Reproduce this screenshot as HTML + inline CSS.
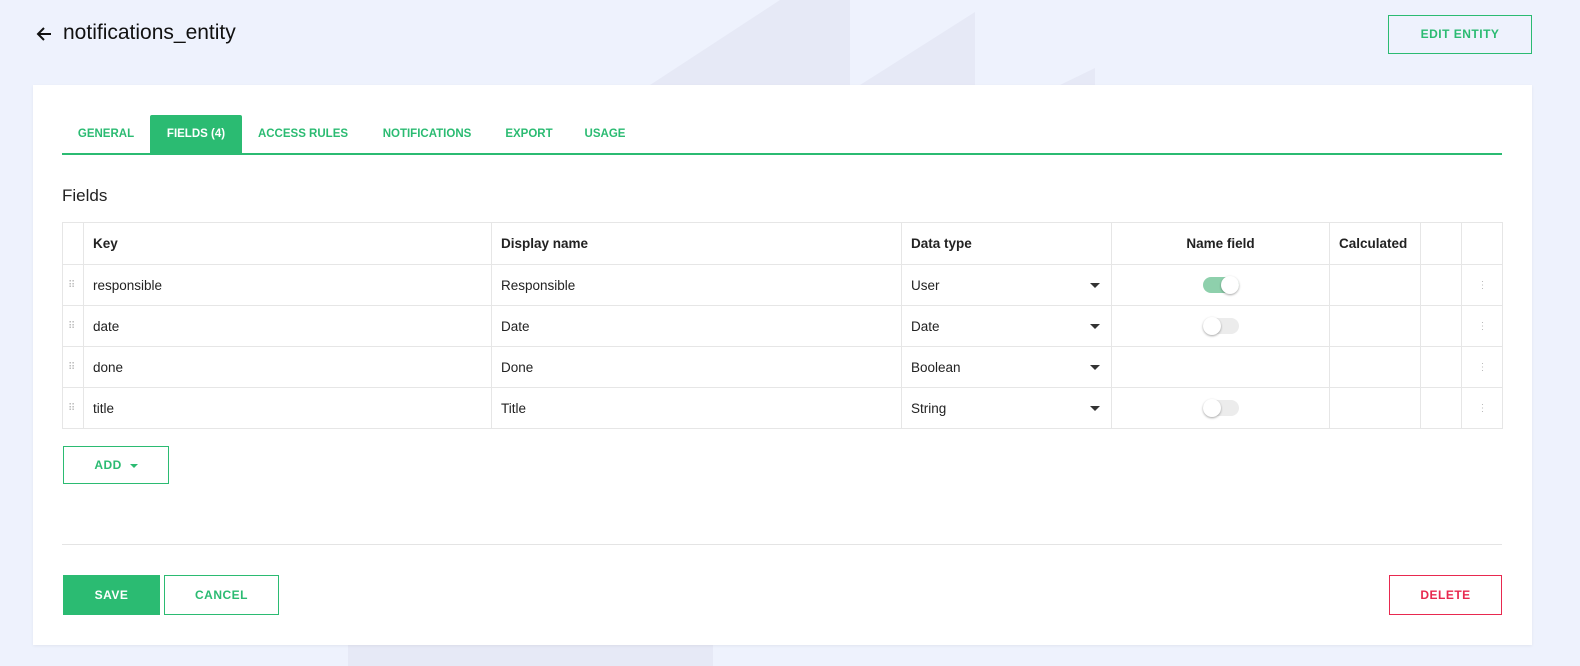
<!DOCTYPE html>
<html><head><style>
*{box-sizing:border-box;margin:0;padding:0}
body{width:1580px;height:666px;background:#eef2fd;font-family:"Liberation Sans",sans-serif;position:relative;overflow:hidden;color:#222}
.abs{position:absolute}
.card{left:33px;top:85px;width:1499px;height:560px;background:#fff;box-shadow:0 1px 3px rgba(0,0,0,.06)}
.tab{position:absolute;top:115px;height:38px;line-height:38px;font-size:11.5px;font-weight:bold;color:#2bbb72;text-align:center}
table{position:absolute;left:62px;top:222px;width:1440px;table-layout:fixed;border-collapse:collapse;font-size:13.5px}
td{border:1px solid #e6e6e6;height:41px;padding:0 9px;vertical-align:middle;overflow:hidden;white-space:nowrap}
th{border:1px solid #e6e6e6;height:42px;padding:0 9px;text-align:left;font-size:13.5px;font-weight:bold;white-space:nowrap}
.arr{float:right;width:0;height:0;border-left:5px solid transparent;border-right:5px solid transparent;border-top:5px solid #333;margin-top:5px;margin-right:2px}
.tg{display:block;margin:0 auto;width:36px;height:16px;border-radius:8px;background:#ececec;position:relative}
.tg:after{content:"";position:absolute;top:-1px;left:0;width:18px;height:18px;border-radius:50%;background:#fff;box-shadow:0 1px 2px rgba(0,0,0,.35)}
.tg.on{background:#8ed0ac}.tg.on:after{left:18px}
.dots{color:#bbb;font-size:10px;letter-spacing:-1px;padding:0 5px}
.btn{position:absolute;font-size:12px;font-weight:bold;text-align:center;letter-spacing:.5px}
</style></head><body>
<svg class="abs" style="left:0;top:0" width="1580" height="666">
<polygon points="650,85 780,0 850,0 850,85" fill="#e6e9f6"/>
<polygon points="860,85 975,12 975,85" fill="#e6e9f6"/>
<polygon points="1060,85 1095,68 1095,85" fill="#e6e9f6"/>
<rect x="348" y="645" width="365" height="21" fill="#e6e9f6"/>
</svg>
<svg class="abs" style="left:36px;top:26px" width="16" height="16" viewBox="0 0 16 16"><path d="M15 8H2M8 2L2 8l6 6" stroke="#111" stroke-width="2" fill="none"/></svg>
<div class="abs" style="left:63px;top:21px;font-size:21px;color:#111">notifications_entity</div>
<div class="btn" style="left:1388px;top:15px;width:144px;height:39px;line-height:37px;border:1px solid #2bbb72;color:#2bbb72">EDIT ENTITY</div>
<div class="abs card"></div>
<div class="tab" style="left:63px;width:86px">GENERAL</div>
<div class="tab" style="left:150px;width:92px;background:#2bbb72;color:#fff;border-radius:2px 2px 0 0">FIELDS (4)</div>
<div class="tab" style="left:242px;width:122px">ACCESS RULES</div>
<div class="tab" style="left:364px;width:126px">NOTIFICATIONS</div>
<div class="tab" style="left:490px;width:78px">EXPORT</div>
<div class="tab" style="left:568px;width:74px">USAGE</div>
<div class="abs" style="left:62px;top:153px;width:1440px;height:2px;background:#2bbb72"></div>
<div class="abs" style="left:62px;top:186px;font-size:17px;color:#222">Fields</div>
<table>
<colgroup><col style="width:21px"><col style="width:408px"><col style="width:410px"><col style="width:210px"><col style="width:218px"><col style="width:91px"><col style="width:41px"><col style="width:41px"></colgroup>
<tr><th></th><th>Key</th><th>Display name</th><th>Data type</th><th style="text-align:center">Name field</th><th>Calculated</th><th></th><th></th></tr>
<tr><td class="dots">⠿</td><td>responsible</td><td>Responsible</td><td>User<span class="arr"></span></td><td><span class="tg on"></span></td><td></td><td></td><td class="dots" style="text-align:center">⋮</td></tr>
<tr><td class="dots">⠿</td><td>date</td><td>Date</td><td>Date<span class="arr"></span></td><td><span class="tg"></span></td><td></td><td></td><td class="dots" style="text-align:center">⋮</td></tr>
<tr><td class="dots">⠿</td><td>done</td><td>Done</td><td>Boolean<span class="arr"></span></td><td></td><td></td><td></td><td class="dots" style="text-align:center">⋮</td></tr>
<tr><td class="dots">⠿</td><td>title</td><td>Title</td><td>String<span class="arr"></span></td><td><span class="tg"></span></td><td></td><td></td><td class="dots" style="text-align:center">⋮</td></tr>
</table>
<div class="btn" style="left:63px;top:446px;width:106px;height:38px;line-height:36px;border:1px solid #2bbb72;color:#2bbb72">ADD <span style="display:inline-block;width:0;height:0;border-left:4px solid transparent;border-right:4px solid transparent;border-top:4px solid #2bbb72;vertical-align:middle;margin-left:4px"></span></div>
<div class="abs" style="left:62px;top:544px;width:1440px;height:1px;background:#e4e4e4"></div>
<div class="btn" style="left:63px;top:575px;width:97px;height:40px;line-height:40px;background:#2bbb72;color:#fff">SAVE</div>
<div class="btn" style="left:164px;top:575px;width:115px;height:40px;line-height:38px;border:1px solid #2bbb72;color:#2bbb72">CANCEL</div>
<div class="btn" style="left:1389px;top:575px;width:113px;height:40px;line-height:38px;border:1px solid #e8294f;color:#e8294f">DELETE</div>
</body></html>
